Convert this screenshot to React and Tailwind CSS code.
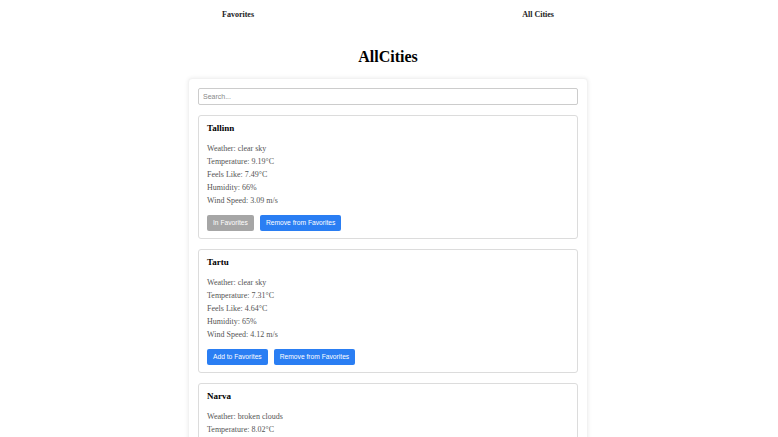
import React, { useState } from 'react';

const cities = [
    { name: 'Tallinn', weather: 'clear sky', temp: '9.19', feels: '7.49', humidity: 66, wind: '3.09', fav: true },
    { name: 'Tartu', weather: 'clear sky', temp: '7.31', feels: '4.64', humidity: 65, wind: '4.12', fav: false },
    { name: 'Narva', weather: 'broken clouds', temp: '8.02', feels: '6.11', humidity: 71, wind: '3.60', fav: false },
];

const CityCard = ({ city }) => (
    <div className="border border-[#dcdcdc] rounded-[3px] bg-white px-[8px] pt-[6px] pb-[7px]">
        <h3 className="text-[9px] font-bold text-black leading-[13px] mb-[7px]">{city.name}</h3>
        <div className="text-[8px] text-[#555] leading-[13px]">
            <p>Weather: {city.weather}</p>
            <p>Temperature: {city.temp}°C</p>
            <p>Feels Like: {city.feels}°C</p>
            <p>Humidity: {city.humidity}%</p>
            <p>Wind Speed: {city.wind} m/s</p>
        </div>
        <div className="flex gap-[6px] mt-[8px] font-['Liberation_Sans',Arial,sans-serif] text-[6.7px] text-white">
            {city.fav ? (
                <button className="h-[16px] px-[6px] rounded-[2px] bg-[#a6a6a6]">In Favorites</button>
            ) : (
                <button className="h-[16px] px-[6px] rounded-[2px] bg-[#2a7ef3]">Add to Favorites</button>
            )}
            <button className="h-[16px] px-[6px] rounded-[2px] bg-[#2a7ef3]">Remove from Favorites</button>
        </div>
    </div>
);

const App = () => {
    const [query, setQuery] = useState('');

    return (
        <div className="min-h-screen bg-white pr-[2px] font-['Liberation_Serif','Times_New_Roman',serif]">
            {/* Nav */}
            <nav className="max-w-[600px] mx-auto flex justify-around pt-[9px] text-[8px] leading-[11px] font-bold text-[#222]">
                <a href="#">Favorites</a>
                <a href="#">All Cities</a>
            </nav>

            <h1 className="text-center text-[16px] font-bold text-black mt-[26px] leading-[22px]">AllCities</h1>

            <div className="w-[400px] mx-auto mt-[10px] bg-white rounded-[4px] shadow-[0_0_4px_rgba(0,0,0,0.08)] border border-[#f2f2f2] px-[9px] pt-[9px] pb-[10px]">
                <input
                    value={query}
                    onChange={(e) => setQuery(e.target.value)}
                    placeholder="Search..."
                    className="block w-full h-[17px] border border-[#ccc] rounded-[2px] px-[4px] text-[7px] font-['Liberation_Sans',Arial,sans-serif] placeholder:text-[#888] outline-none"
                />
                <div className="flex flex-col gap-[10px] mt-[10px]">
                    {cities
                        .filter((c) => c.name.toLowerCase().includes(query.toLowerCase()))
                        .map((c) => (
                            <CityCard key={c.name} city={c} />
                        ))}
                </div>
            </div>
        </div>
    );
};

export default App;
